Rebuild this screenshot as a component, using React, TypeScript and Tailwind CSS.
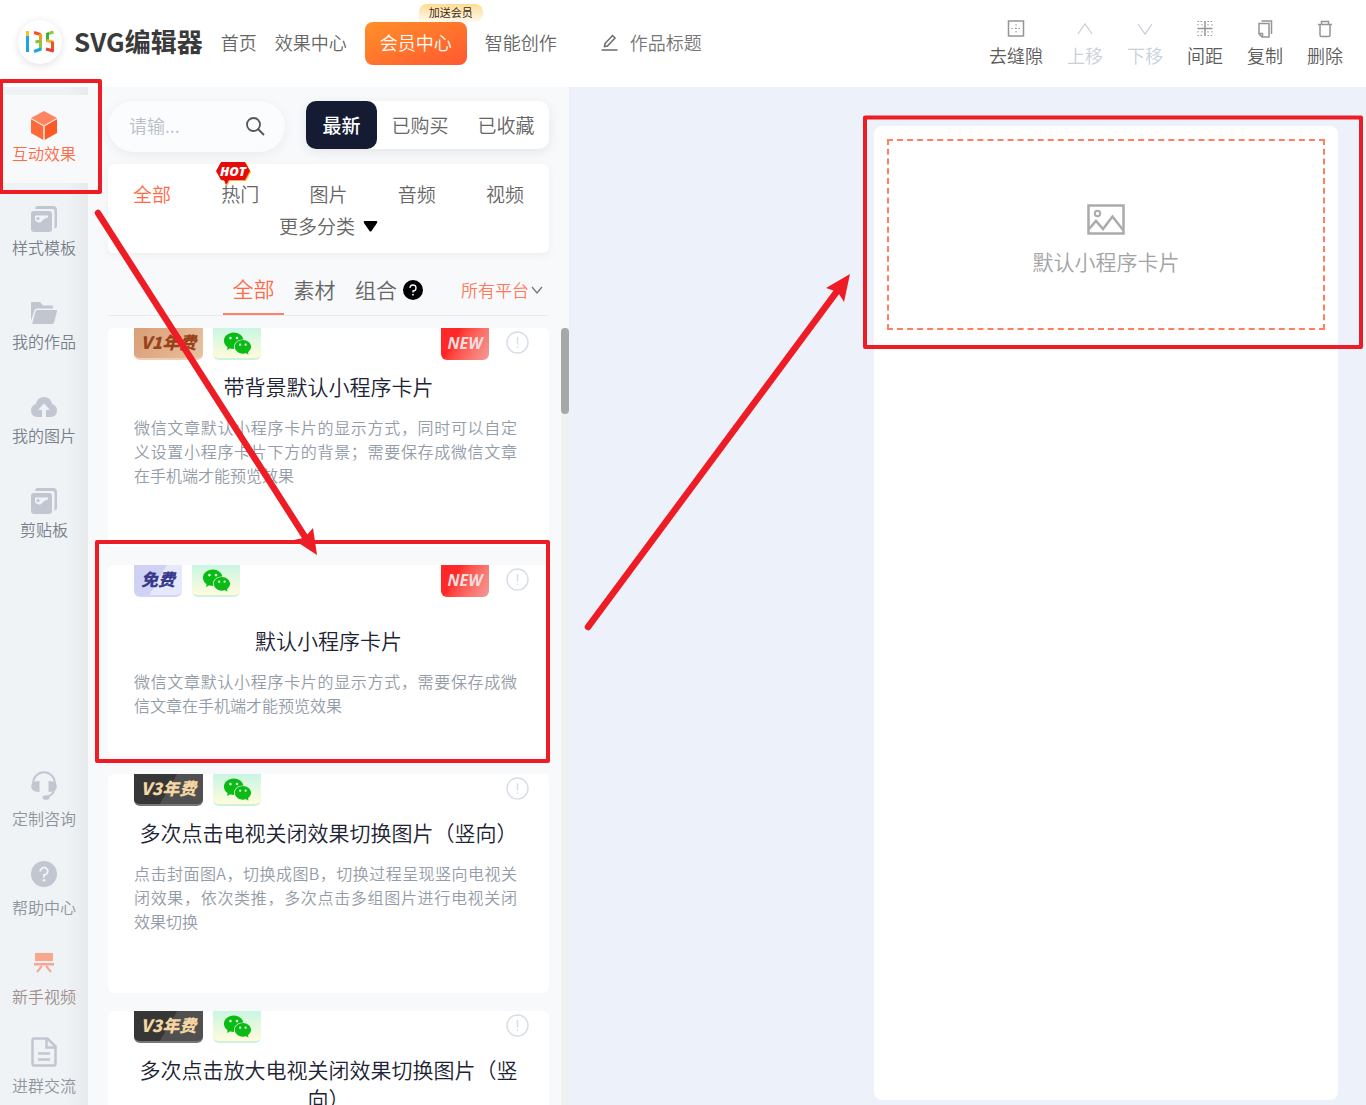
import type { ReactNode } from "react";
import clsx from "clsx";
import { AiFillWechat } from "react-icons/ai";

function Logo() {
  return (
    <div className="mb-1 flex size-11 shrink-0 items-center justify-center rounded-full bg-white shadow-[0_2px_8px_rgba(0,0,0,0.12)]">
      <svg width="30" height="24" viewBox="0 0 30 24" fill="none" strokeWidth="3">
        <path d="M2.500 6V22" stroke="#1ba4e8" />
        <path d="M2.500 1V6" stroke="#f5c518" />
        <path d="M9 2.500L15.500 4.500" stroke="#f0522b" />
        <path d="M15.500 4V12" stroke="#f59a23" />
        <path d="M15.500 11L10.500 12" stroke="#7cc243" />
        <path d="M15.500 11.500V20" stroke="#8ccb3f" />
        <path d="M16 19L9 21.500" stroke="#1ba4e8" />
        <path d="M28.500 2L22 4" stroke="#8ccb3f" />
        <path d="M22.500 3V12" stroke="#3fae49" />
        <path d="M21.500 10.500L28 12" stroke="#f5b51e" />
        <path d="M27.500 11.500V22" stroke="#f0522b" />
        <path d="M28.500 21L21 19" stroke="#e8432e" />
      </svg>
    </div>
  );
}

function CubeIcon() {
  return (
    <svg width="26" height="29" viewBox="0 0 26 29">
      <path d="M13 0L26 7L13 14.500L0 7Z" fill="#ff8562" />
      <path d="M0 8L12.400 15.300V29L0 22Z" fill="#ff6a3a" />
      <path d="M26 8L13.600 15.300V29L26 22Z" fill="#fb5a26" />
      <path d="M0 7.500L13 15L26 7.500M13 15V29" stroke="#ffd9cc" fill="none" />
    </svg>
  );
}

function TemplateIcon() {
  return (
    <svg width="26" height="26" viewBox="0 0 26 26" fill="#c2c6d1">
      <path d="M6 0H22Q26 0 26 4V20Q26 22 23.500 22.500V5Q23.500 3 21.500 3H4Q4.500 0 6 0Z" />
      <path
        fillRule="evenodd"
        d="M3 5H18Q21 5 21 8V23Q21 26 18 26H3Q0 26 0 23V8Q0 5 3 5ZM4 10V13Q4 16 7 16Q9 18 11 15Q13 12 17 11.500V9.500H5Q4 9.500 4 10Z"
      />
      <circle cx="7" cy="12.500" r="1.600" />
    </svg>
  );
}

function FolderIcon() {
  return (
    <svg width="26" height="24" viewBox="0 0 26 24" fill="#c2c6d1">
      <path d="M0 2Q0 1 1 1H9L12 4.500H21Q22 4.500 22 5.500V7.500H6Q4 7.500 3.500 9L0 20Z" />
      <path d="M6.500 9H25Q26.300 9 26 10.500L23 21.500Q22.500 23 21 23H2.500Q1 23 1.500 21.500L4.500 10.500Q5 9 6.500 9Z" />
    </svg>
  );
}

function CloudIcon() {
  return (
    <svg width="26" height="22" viewBox="0 0 26 22" fill="#c2c6d1">
      <path d="M11 21H6.500Q0 20.500 0 14.500Q0 9.500 5 8Q6.500 1 13 1Q19.500 1 21 8Q26 9.500 26 14.500Q26 20.500 19.500 21H15V14H19L13 7.500L7 14H11Z" />
    </svg>
  );
}

function HeadsetIcon() {
  return (
    <svg width="26" height="29" viewBox="0 0 26 29" fill="#c2c6d1">
      <path d="M2.200 13V12A10.800 10.800 0 0 1 23.800 12V13" fill="none" stroke="#c2c6d1" strokeWidth="2" />
      <path d="M8.500 10V21Q1 21 0 15.500Q1 10 8.500 10ZM17.500 10V21Q25 21 26 15.500Q25 10 17.500 10Z" />
      <path d="M23.500 18Q22 25 14 26.500" fill="none" stroke="#c2c6d1" strokeWidth="2" />
      <ellipse cx="15" cy="26.500" rx="3.500" ry="2.300" />
    </svg>
  );
}

function HelpIcon() {
  return (
    <svg width="26" height="26" viewBox="0 0 26 26">
      <circle cx="13" cy="13" r="13" fill="#c2c6d1" />
      <path d="M9.300 10.500A3.700 3.700 0 1 1 13 14V16.500" fill="none" stroke="#eff3f6" strokeWidth="2" />
      <circle cx="13" cy="19.300" r="1.400" fill="#eff3f6" />
    </svg>
  );
}

function BoardIcon() {
  return (
    <svg width="20" height="22" viewBox="0 0 20 22" fill="#f9a58f">
      <path d="M1 1H19V9H1ZM0 11H20V13.500H0Z" />
      <path d="M8 14L3 20M12 14L17 20" stroke="#f9a58f" strokeWidth="2" />
    </svg>
  );
}

function DocIcon() {
  return (
    <svg width="26" height="30" viewBox="0 0 26 30" fill="none" stroke="#c2c6d1" strokeWidth="2.500">
      <path d="M3.500 1.500H16.500L24.500 9.500V26.500Q24.500 28.500 22.500 28.500H3.500Q1.500 28.500 1.500 26.500V3.500Q1.500 1.500 3.500 1.500Z" />
      <path d="M15.500 2V10.500H24" />
      <path d="M7 16.500H19M7 22.500H19" />
    </svg>
  );
}

type SideItem = { label: string; icon: ReactNode; active?: boolean };

const topItems: SideItem[] = [
  { label: "互动效果", icon: <CubeIcon />, active: true },
  { label: "样式模板", icon: <TemplateIcon /> },
  { label: "我的作品", icon: <FolderIcon /> },
  { label: "我的图片", icon: <CloudIcon /> },
  { label: "剪贴板", icon: <TemplateIcon /> },
];

const bottomItems = [
  { label: "定制咨询", icon: <HeadsetIcon />, color: "text-[#8f959c]" },
  { label: "帮助中心", icon: <HelpIcon />, color: "text-[#8f959c]" },
  { label: "新手视频", icon: <BoardIcon />, color: "text-[#a08f8c]" },
  { label: "进群交流", icon: <DocIcon />, color: "text-[#8f959c]" },
];

const tools = [
  {
    label: "去缝隙",
    icon: (
      <>
        <rect x="1" y="1" width="15" height="15" strokeWidth="1.500" />
        <path d="M8.500 4V13M4 8.500H13" strokeDasharray="1.500 2" />
      </>
    ),
  },
  { label: "上移", disabled: true, icon: <path d="M1.500 14L8.500 4L15.500 14" strokeWidth="1.300" /> },
  { label: "下移", disabled: true, icon: <path d="M1.500 4L8.500 14L15.500 4" strokeWidth="1.300" /> },
  {
    label: "间距",
    icon: (
      <>
        <path d="M8.500 1V16M1 8.500H16" strokeWidth="1.500" />
        <path
          d="M1 1.500H6.500M11 1.500H16.500M1 15.500H6.500M11 15.500H16.500M1.500 4V6M15.500 4V6M1.500 11V13M15.500 11V13M5.500 4V6M11.500 4V6M5.500 11V13M11.500 11V13"
          strokeDasharray="1.500 1.500"
        />
      </>
    ),
  },
  {
    label: "复制",
    icon: (
      <>
        <path d="M5 1H15V14" strokeWidth="1.500" />
        <path d="M3 3.500H12.500V17H5.500L2.500 14V3.500ZM2.500 13.500H6V17" strokeWidth="1.500" />
      </>
    ),
  },
  {
    label: "删除",
    icon: (
      <path
        d="M1.500 4.500H15.500M5 4V1.500H12V4M3.500 5V15Q3.500 16.500 5 16.500H12Q13.500 16.500 13.500 15V5"
        strokeWidth="1.500"
      />
    ),
  },
];

function Header() {
  return (
    <header className="flex h-[87px] shrink-0 items-center bg-white pr-[23px] pl-[18px] text-lg text-[#666]">
      <Logo />
      <h1 className="mr-[18px] mb-1 ml-3 text-[26px] font-bold whitespace-nowrap text-[#3a3a3a]">
        SVG编辑器
      </h1>
      <nav className="flex items-center gap-[18px] whitespace-nowrap">
        <a href="#" className="pb-1">首页</a>
        <a href="#" className="pb-1">效果中心</a>
        <div className="relative">
          <button className="h-[43px] w-[102px] rounded-lg bg-gradient-to-br from-[#ff8f28] to-[#ff5630] pb-1 text-white">
            会员中心
          </button>
          <span className="absolute -top-[18px] left-[54px] h-[18px] w-16 rounded-t-lg rounded-br-lg bg-gradient-to-b from-[#fddc92] to-[#fffaf0] text-center text-[11px] leading-4 font-normal text-[#3b2b12]">
            加送会员
          </span>
        </div>
        <a href="#" className="pb-1">智能创作</a>
      </nav>
      <button className="ml-11 flex items-center gap-3 pb-[3px] whitespace-nowrap text-[#777]">
        <svg width="17" height="17" viewBox="0 0 17 17" fill="none" stroke="#6b6b6b" strokeWidth="1.500">
          <path d="M3.500 12.500L4 9.500L11.500 1.500L14 4L6.500 12ZM0.500 16H16.500" />
        </svg>
        作品标题
      </button>
      <div className="ml-auto flex gap-6">
        {tools.map((tool) => (
          <button
            key={tool.label}
            className={clsx(
              "flex flex-col items-center gap-[5px] leading-6 whitespace-nowrap",
              tool.disabled ? "text-[#c8d0da]" : "text-[#5c5c5c]"
            )}
          >
            <svg
              width="18"
              height="18"
              viewBox="0 0 17 18"
              fill="none"
              stroke={tool.disabled ? "#c8d0da" : "#959595"}
            >
              {tool.icon}
            </svg>
            {tool.label}
          </button>
        ))}
      </div>
    </header>
  );
}

function Sidebar() {
  return (
    <aside className="flex w-[88px] shrink-0 flex-col bg-gradient-to-r from-[#eff3f6] from-75% to-[#e7eaed] pt-2 leading-6">
      <div className="flex flex-col gap-1.5">
        {topItems.map((item) => (
          <button
            key={item.label}
            className={clsx(
              "flex h-[88px] flex-col items-center gap-[3px] pt-[17px]",
              item.active ? "bg-[#f7f9fb] text-[#ff6b47]" : "text-[#78808a]"
            )}
          >
            <span className="flex h-[26px] items-center">{item.icon}</span>
            {item.label}
          </button>
        ))}
      </div>
      <div className="mt-auto">
        {bottomItems.map((item) => (
          <button
            key={item.label}
            className={clsx(
              "flex h-[89px] w-full flex-col items-center justify-end gap-1.5 pb-2",
              item.color
            )}
          >
            <span className="flex h-[30px] items-center">{item.icon}</span>
            {item.label}
          </button>
        ))}
      </div>
    </aside>
  );
}

type Effect = {
  title: string;
  desc?: string;
  level: "V1年费" | "V3年费" | "免费";
  isNew?: boolean;
  className: string;
  titleClass: string;
};

const effects: Effect[] = [
  {
    title: "带背景默认小程序卡片",
    desc: "微信文章默认小程序卡片的显示方式，同时可以自定义设置小程序卡片下方的背景；需要保存成微信文章在手机端才能预览效果",
    level: "V1年费",
    isNew: true,
    className: "min-h-[219px]",
    titleClass: "mt-3",
  },
  {
    title: "默认小程序卡片",
    desc: "微信文章默认小程序卡片的显示方式，需要保存成微信文章在手机端才能预览效果",
    level: "免费",
    isNew: true,
    className: "min-h-[191px]",
    titleClass: "mt-[29px]",
  },
  {
    title: "多次点击电视关闭效果切换图片（竖向）",
    desc: "点击封面图A，切换成图B，切换过程呈现竖向电视关闭效果，依次类推，多次点击多组图片进行电视关闭效果切换",
    level: "V3年费",
    className: "min-h-[219px]",
    titleClass: "mt-3",
  },
  {
    title: "多次点击放大电视关闭效果切换图片（竖向）",
    level: "V3年费",
    className: "min-h-[219px]",
    titleClass: "mt-3",
  },
];

const levelStyles = {
  V1年费: "w-[69px] border-[#f0cfb4] bg-linear-120 from-[#d99e77] to-[#e8c19e] text-[#98421b]",
  V3年费: "w-[69px] border-[#777] bg-linear-120 from-[#363636] from-50% to-[#505050] to-50% text-[#f3d6a3]",
  免费: "w-12 border-[#d3d5f7] bg-linear-120 from-[#cfd1f5] from-50% to-[#e6e8fb] to-50% text-[#37398a]",
};

function EffectCard({ effect }: { effect: Effect }) {
  return (
    <article className={clsx("shrink-0 rounded-md bg-white px-[26px]", effect.className)}>
      <div className="-mr-1.5 flex h-8 items-start">
        <span
          className={clsx(
            "h-8 rounded-b-md border-b-2 text-center text-[17px] leading-7 font-black whitespace-nowrap italic",
            levelStyles[effect.level]
          )}
        >
          {effect.level}
        </span>
        <span className="ml-2.5 flex h-8 w-12 items-center justify-center rounded-b-md border-b-2 border-[#cdf3dc] bg-gradient-to-b from-[#c9f6e3] to-[#fffbdc] text-[#0abb16]">
          <AiFillWechat size={31} />
        </span>
        {effect.isNew && (
          <span className="ml-auto h-8 w-12 rounded-b-md bg-linear-120 from-[#ff2828] from-30% to-[#f29a9a] text-center font-['Open_Sans'] text-base leading-[31px] font-bold text-[#f3dede] italic">
            NEW
          </span>
        )}
        <button
          aria-label="详情"
          className={clsx("mt-[3px]", effect.isNew ? "ml-[17px]" : "ml-auto")}
        >
          <svg width="23" height="23" viewBox="0 0 23 23" fill="none" stroke="#d8dee9" strokeWidth="1.500">
            <circle cx="11.500" cy="11.500" r="10.500" />
            <path d="M11.500 6V13.500M11.500 15.500V17" />
          </svg>
        </button>
      </div>
      <h2 className={clsx("text-center text-[21px] leading-[29px] text-[#1c2333]", effect.titleClass)}>
        {effect.title}
      </h2>
      {effect.desc && (
        <p className="mt-3.5 mr-1.5 text-justify text-base leading-6 text-[#939ca7]">
          {effect.desc}
        </p>
      )}
    </article>
  );
}

function EffectPanel() {
  return (
    <section className="flex w-[481px] shrink-0 flex-col bg-[#f7f9fb] pt-3.5 pl-5 text-[#666]">
      <div className="mr-5 flex items-start justify-between text-[19px]">
        <div className="flex h-[51px] w-[177px] items-center rounded-full bg-[#fbfcfd] pr-5 pl-[21px] shadow-[0_3px_12px_rgba(0,0,0,0.06)]">
          <input
            type="text"
            aria-label="搜索"
            placeholder="请输..."
            className="w-0 flex-1 pb-1 text-lg outline-none placeholder:text-[#b8bfcb]"
          />
          <svg width="19" height="19" viewBox="0 0 19 19" fill="none" stroke="#555" strokeWidth="1.800">
            <circle cx="7.500" cy="7.500" r="6.500" />
            <path d="M12 12L18 18" />
          </svg>
        </div>
        <div className="flex h-12 w-[243px] rounded-[10px] bg-white shadow-[0_3px_12px_rgba(0,0,0,0.08)]">
          <button className="w-[71px] rounded-[10px] bg-[#141b33] font-medium text-white">最新</button>
          <button className="flex-1">已购买</button>
          <button className="flex-1">已收藏</button>
        </div>
      </div>

      <div className="mt-3 mr-5 rounded-md bg-white pt-3.5 pb-[11px] text-[19px] leading-8 shadow-[0_2px_8px_rgba(0,0,0,0.05)]">
        <div className="grid grid-cols-5">
          <button className="text-[#ff6b47]">全部</button>
          <button className="relative">
            热门
            <svg width="36" height="25" viewBox="0 0 36 25" className="absolute -top-4 left-5">
              <path d="M6 1H30L35 10L30 19H14L11 24L9 19H6L1 10Z" fill="#f7b733" />
              <path d="M5 0H29L34 9L29 18H13L10 23L8 18H5L0 9Z" fill="#e60b0b" />
              <text
                x="17"
                y="14"
                textAnchor="middle"
                fill="#fff"
                fontFamily="Open Sans"
                fontSize="13"
                fontWeight="800"
                fontStyle="italic"
              >
                HOT
              </text>
            </svg>
          </button>
          <button>图片</button>
          <button>音频</button>
          <button>视频</button>
        </div>
        <button className="mx-auto flex items-center gap-2">
          更多分类
          <svg width="15" height="11" viewBox="0 0 15 11" fill="#000">
            <path d="M1.500 0H13.500Q15 0.500 14 2L8.500 10Q7.500 11 6.500 10L1 2Q0 0.500 1.500 0Z" />
          </svg>
        </button>
      </div>

      <div className="mt-[11px] mr-5 flex h-[52px] items-stretch border-b border-[#e9ebee] pl-[115px] text-[21px]">
        <button className="w-[61px] border-b-2 border-[#ff8266] text-[#ff6b47]">全部</button>
        <button className="w-[61px]">素材</button>
        <button className="pr-1.5 pl-2.5">组合</button>
        <svg width="20" height="20" viewBox="0 0 20 20" className="self-center">
          <circle cx="10" cy="10" r="10" fill="#000" />
          <path d="M7 8A3 3 0 1 1 10 11V12.500" fill="none" stroke="#fff" strokeWidth="1.300" />
          <circle cx="10" cy="14.700" r="0.900" fill="#fff" />
        </svg>
        <div className="relative mr-1.5 ml-auto flex items-center">
          <select
            aria-label="平台"
            className="w-[82px] appearance-none bg-transparent text-[17px] text-[#ff7a5c] outline-none"
          >
            <option>所有平台</option>
          </select>
          <svg
            width="12"
            height="8"
            viewBox="0 0 12 8"
            fill="none"
            stroke="#777"
            strokeWidth="1.300"
            className="pointer-events-none absolute right-0"
          >
            <path d="M1 1L6 7L11 1" />
          </svg>
        </div>
      </div>

      <div className="mt-3 flex min-h-0 flex-1 justify-between">
        <div className="flex w-[441px] flex-col gap-[18px] overflow-hidden">
          {effects.map((effect) => (
            <EffectCard key={effect.title} effect={effect} />
          ))}
        </div>
        <div className="w-2 bg-[#f0f0f0]">
          <div className="h-[86px] rounded-full bg-[#a8a8a8]" />
        </div>
      </div>
    </section>
  );
}

function Preview() {
  return (
    <main className="flex flex-1 justify-end bg-[#edf1f9] pt-[39px] pr-7 pb-[5px]">
      <div className="w-[464px] rounded-lg bg-white px-[13px] pt-[13px]">
        <div className="flex h-[191px] flex-col items-center justify-center gap-3 border-2 border-dashed border-[#ff7f60] pt-2.5 text-[#a3a3a3]">
          <svg width="38" height="31" viewBox="0 0 38 31" fill="none" stroke="#ababab" strokeWidth="2.500">
            <rect x="1.500" y="1.500" width="35" height="28" />
            <circle cx="10.500" cy="9.500" r="2.700" strokeWidth="2" />
            <path d="M2 25L9 17L16 25L25.500 12.500L36 26" />
          </svg>
          <p className="text-[21px] leading-[29px]">默认小程序卡片</p>
        </div>
      </div>
    </main>
  );
}

// Red guide boxes and arrows drawn over the editor
function GuideMarks() {
  return (
    <svg
      width="1366"
      height="1105"
      viewBox="0 0 1366 1105"
      className="pointer-events-none absolute top-0 left-0"
      fill="none"
      stroke="#ee1c25"
      strokeWidth="4"
      strokeLinejoin="round"
      strokeLinecap="round"
    >
      <rect x="1" y="81" width="99" height="111" />
      <rect x="97" y="542" width="451" height="219" />
      <rect x="865" y="117.500" width="496" height="229.500" />
      <path d="M98 213L307 540" strokeWidth="6.500" />
      <path d="M317 555L294 540L303 538L306 536L313 528Z" fill="#ee1c25" stroke="none" />
      <path d="M588 627L838 290" strokeWidth="6.500" />
      <path d="M850 274L826 288L835 291L839 294L844 302Z" fill="#ee1c25" stroke="none" />
    </svg>
  );
}

function App() {
  return (
    <div className="relative flex h-screen flex-col overflow-hidden bg-white font-['Noto_Sans_CJK_SC',sans-serif] font-[350]">
      <Header />
      <div className="flex min-h-0 flex-1">
        <Sidebar />
        <EffectPanel />
        <Preview />
      </div>
      <GuideMarks />
    </div>
  );
}

export default App;
